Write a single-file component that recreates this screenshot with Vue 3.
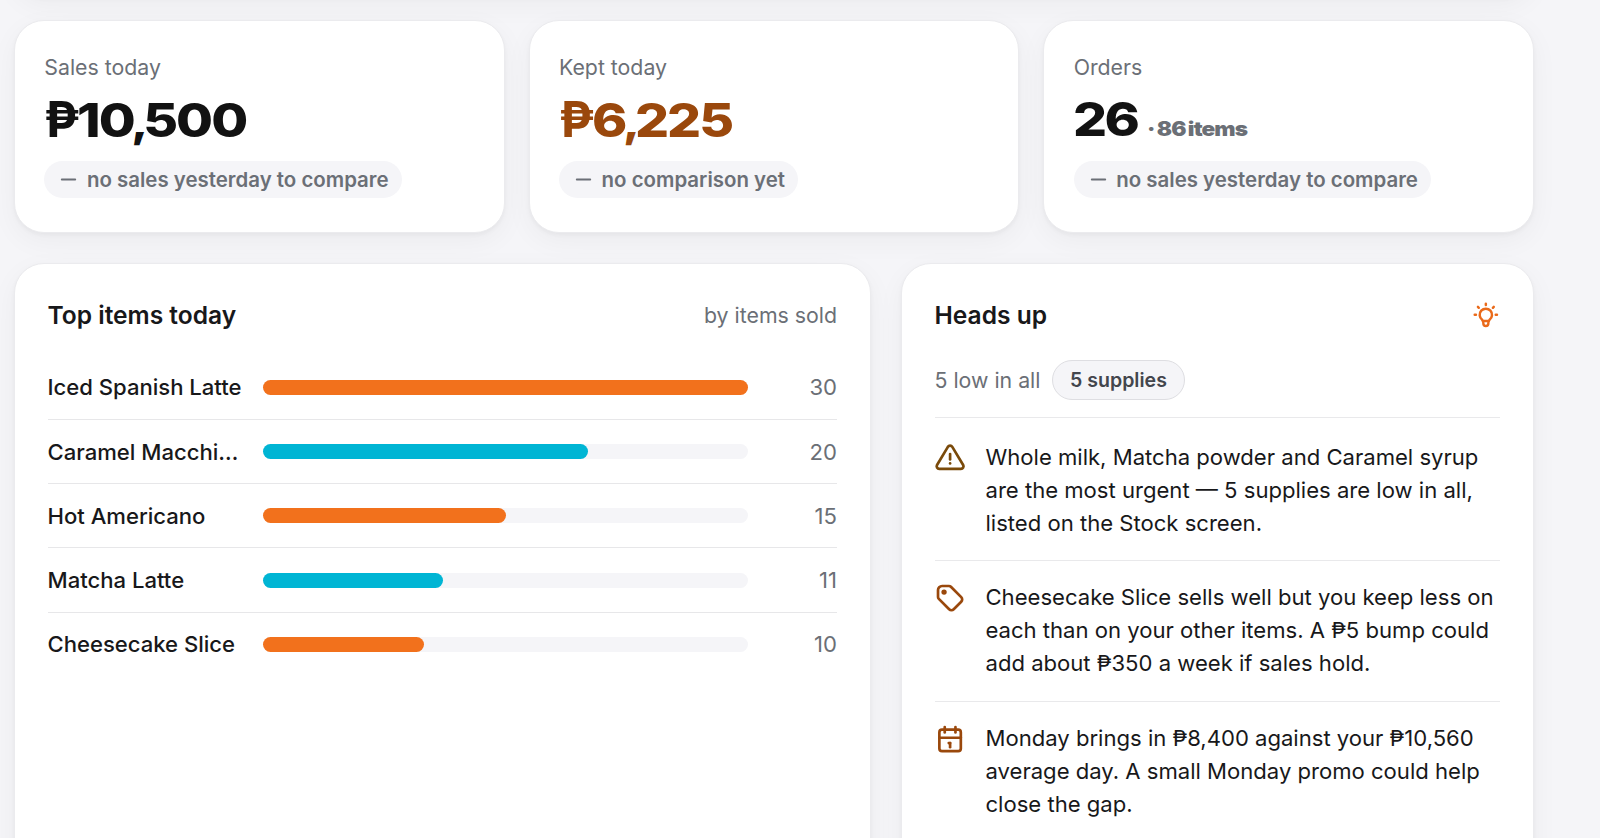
<script setup>
const stats = [
  { label: 'Sales today', peso: true, value: ['10', '500'], note: 'no sales yesterday to compare' },
  { label: 'Kept today', peso: true, value: ['6', '225'], note: 'no comparison yet', accent: true },
  { label: 'Orders', value: ['26'], extra: '86', unit: 'items', note: 'no sales yesterday to compare' },
]
const items = [
  { name: 'Iced Spanish Latte', count: 30, pct: 100 },
  { name: 'Caramel Macchi…', count: 20, pct: 67 },
  { name: 'Hot Americano', count: 15, pct: 50 },
  { name: 'Matcha Latte', count: 11, pct: 37 },
  { name: 'Cheesecake Slice', count: 10, pct: 33.1 },
]
const tips = [
  {
    tone: 'warn',
    paths: [
      'M12 9v4',
      'M10.363 3.591l-8.106 13.534a1.914 1.914 0 0 0 1.636 2.871h16.214a1.914 1.914 0 0 0 1.636 -2.87l-8.106 -13.536a1.914 1.914 0 0 0 -3.274 0z',
      'M12 16h.01',
    ],
    lines: ['Whole milk, Matcha powder and Caramel syrup', 'are the most urgent — 5 supplies are low in all,', 'listed on the Stock screen.'],
  },
  {
    tone: 'rust',
    paths: [
      'M6.5 7.5a1 1 0 1 0 2 0a1 1 0 1 0 -2 0',
      'M3 6v5.172a2 2 0 0 0 .586 1.414l7.71 7.71a2.41 2.41 0 0 0 3.408 0l5.592 -5.592a2.41 2.41 0 0 0 0 -3.408l-7.71 -7.71a2 2 0 0 0 -1.414 -.586h-5.172a3 3 0 0 0 -3 3z',
    ],
    lines: ['Cheesecake Slice sells well but you keep less on', 'each than on your other items. A ₱5 bump could', 'add about ₱350 a week if sales hold.'],
  },
  {
    tone: 'rust',
    paths: [
      'M4 7a2 2 0 0 1 2 -2h12a2 2 0 0 1 2 2v12a2 2 0 0 1 -2 2h-12a2 2 0 0 1 -2 -2v-12z',
      'M16 3v4', 'M8 3v4', 'M4 11h16', 'M11 15h1', 'M12 15v3',
    ],
    lines: ['Monday brings in ₱8,400 against your ₱10,560', 'average day. A small Monday promo could help', 'close the gap.'],
  },
]
</script>

<template>
  <main class="page">
    <div class="card above"></div>
    <section class="stats">
      <article v-for="s in stats" :key="s.label" class="card stat">
        <div class="label">{{ s.label }}</div>
        <div class="figure" :class="{ accent: s.accent }">
          <span v-if="s.peso" class="peso">₱</span><span class="num" :class="{ plain: !s.peso }">{{ s.value[0] }}<template v-if="s.value[1]"><span class="comma">,</span>{{ s.value[1] }}</template></span>
          <span v-if="s.extra" class="extra"><i>·</i><b>{{ s.extra }}</b><b>{{ s.unit }}</b></span>
        </div>
        <div class="pill">
          <svg viewBox="0 0 24 24"><path d="M5 12h14" /></svg>
          <span>{{ s.note }}</span>
        </div>
      </article>
    </section>
    <section class="panels">
      <article class="card panel top">
        <header>
          <h2>Top items today</h2>
          <span class="hint">by items sold</span>
        </header>
        <ul class="rows">
          <li v-for="(it, i) in items" :key="it.name">
            <span class="name">{{ it.name }}</span>
            <span class="track"><span class="bar" :class="{ cyan: i % 2 }" :style="{ width: it.pct + '%' }"></span></span>
            <span class="count">{{ it.count }}</span>
          </li>
        </ul>
      </article>
      <article class="card panel heads">
        <header>
          <h2>Heads up</h2>
          <svg class="bulb" viewBox="0 0 24 24">
            <path d="M3 12h1m8 -9v1m8 8h1m-15.4 -6.4l.7 .7m12.1 -.7l-.7 .7" />
            <path d="M9 16a5 5 0 1 1 6 0a3.5 3.5 0 0 0 -1 3a2 2 0 0 1 -4 0a3.5 3.5 0 0 0 -1 -3" />
            <path d="M9.7 17l4.6 0" />
          </svg>
        </header>
        <div class="summary">
          <span class="low">5 low in all</span>
          <span class="badge">5 supplies</span>
        </div>
        <div v-for="(t, i) in tips" :key="i" class="tip" :class="{ first: i === 0 }">
          <svg :class="t.tone" viewBox="0 0 24 24"><path v-for="p in t.paths" :key="p" :d="p" /></svg>
          <p><span v-for="l in t.lines" :key="l">{{ l }}</span></p>
        </div>
      </article>
    </section>
  </main>
</template>

<style>
body {
  background: #f5f5f8;
  overflow: hidden;
}
</style>

<style scoped>
.page {
  box-sizing: border-box;
  width: 1600px;
  height: 838px;
  overflow: hidden;
  padding: 0 66px 0 14px;
  display: flow-root;
  background: #f5f5f8;
  color: #18181a;
  font-family: Inter, "Liberation Sans", sans-serif;
  font-size: 22.08px;
}
svg {
  fill: none;
  stroke: currentColor;
  stroke-width: 2;
  stroke-linecap: round;
  stroke-linejoin: round;
  flex: none;
}
.card {
  box-sizing: border-box;
  background: #fff;
  border: 1px solid #ebebee;
  border-radius: 30px;
  box-shadow: 0 2px 4px rgba(20, 20, 30, 0.04), 0 8px 28px rgba(20, 20, 30, 0.045);
}
.above { height: 100px; margin-top: -103px; }
.stats {
  display: grid;
  grid-template-columns: repeat(3, 1fr);
  gap: 24px;
  margin-top: 23px;
}
.stat { height: 213px; padding: 30px 29.3px; }
.label { font-size: 21.3px; line-height: 32px; color: #6b6f76; }
.figure {
  display: flex;
  align-items: baseline;
  height: 60px;
  margin-top: 5.5px;
  line-height: 60px;
  font-weight: 700;
  white-space: nowrap;
  color: #121212;
}
.figure.accent { color: #9a480c; }
.peso { font-size: 49.5px; width: 33px; letter-spacing: -2px; }
.num {
  display: inline-block;
  font-size: 46.5px;
  font-weight: 800;
  letter-spacing: -1.7px;
  transform: scaleX(1.15);
  transform-origin: 0 50%;
}
.num.plain { letter-spacing: -2.3px; margin-left: -0.6px; }
.comma { font-size: 42px; margin: 0 -2.7px 0 -2.2px; }
.extra {
  display: inline-flex;
  gap: 2px;
  margin-left: 18.5px;
  font-size: 20px;
  letter-spacing: -0.8px;
  color: #6b6f76;
  transform: scaleX(1.13);
  transform-origin: 0 50%;
}
.extra i { font-style: normal; font-weight: 900; }
.pill {
  display: inline-flex;
  align-items: center;
  gap: 6.6px;
  height: 37px;
  margin-top: 12.5px;
  padding: 0 13px;
  border-radius: 19px;
  background: #f5f5f8;
  color: #6b6f76;
  font-size: 20.45px;
  font-weight: 600;
  white-space: nowrap;
}
.pill svg { width: 23px; height: 23px; }
.panels {
  display: grid;
  grid-template-columns: 857px 1fr;
  gap: 30px;
  margin-top: 30px;
}
.panel { height: 640px; padding: 33px 33px 33px 32.5px; }
.panel header {
  display: flex;
  align-items: center;
  justify-content: space-between;
  height: 36px;
}
h2 { margin: 0; font-size: 24.55px; font-weight: 600; }
.hint { font-size: 21.3px; color: #6b6f76; }
.rows { list-style: none; margin: 22.6px 0 0; padding: 0; }
.rows li {
  box-sizing: border-box;
  display: grid;
  grid-template-columns: 196px 485px 1fr;
  column-gap: 19.9px;
  align-items: center;
  height: 64.3px;
  border-bottom: 1px solid #e7e7e9;
}
.rows li:last-child { border: 0; height: 63.3px; }
.name {
  font-weight: 500;
  white-space: nowrap;
}
.track { height: 15px; border-radius: 8px; background: #f5f5f8; }
.bar { display: block; height: 15px; border-radius: 8px; background: #f2711c; }
.bar.cyan { background: #00b5d4; }
.count { text-align: right; color: #6b6f76; }
.bulb { width: 29.7px; height: 29.7px; margin-right: -0.7px; color: #ea6a1a; }
.summary {
  display: flex;
  align-items: center;
  gap: 12px;
  height: 40px;
  margin-top: 27px;
  margin-bottom: 17px;
}
.low { font-size: 21.3px; color: #6b6f76; }
.badge {
  box-sizing: border-box;
  height: 40px;
  padding: 0 16.7px;
  border: 1px solid #dedee2;
  border-radius: 20px;
  background: #f5f5f8;
  color: #43464d;
  font-size: 19.55px;
  font-weight: 600;
  line-height: 38px;
}
.tip {
  box-sizing: border-box;
  display: flex;
  gap: 19.4px;
  height: 140.9px;
  padding-top: 19.7px;
  border-top: 1px solid #e9e9eb;
}
.tip.first { height: 143px; padding-top: 22.8px; }
.tip svg { width: 32.2px; height: 32.2px; margin: 1.2px 0 0 -0.6px; }
.warn { color: #7a4a0a; }
.rust { color: #9a480c; }
.tip p { margin: 0; line-height: 33.1px; white-space: nowrap; }
.tip p span { display: block; }
</style>
